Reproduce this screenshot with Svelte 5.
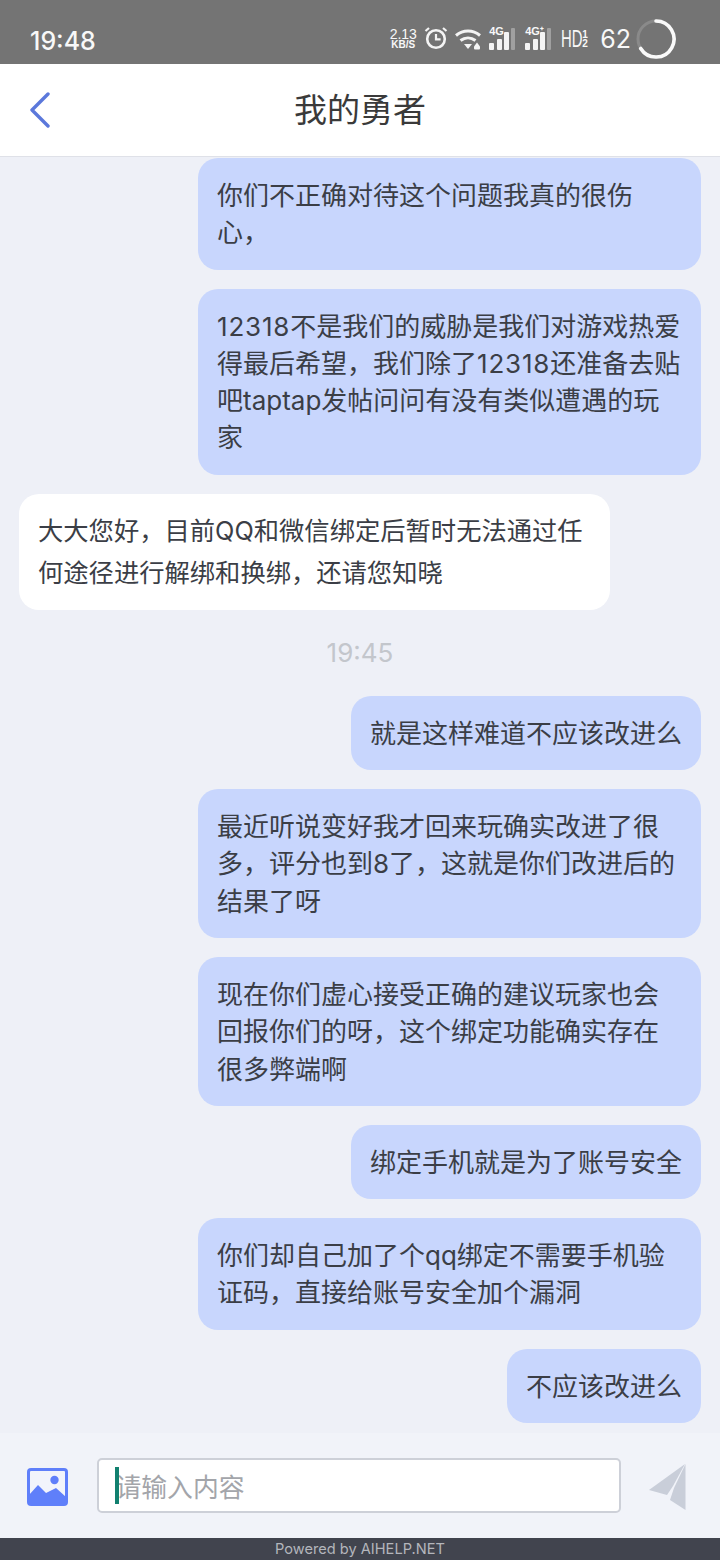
<script>
	const messages = [
		{ side: 'me', wide: true, lines: ['你们不正确对待这个问题我真的很伤', '心，'] },
		{ side: 'me', wide: true, lines: ['12318不是我们的威胁是我们对游戏热爱', '得最后希望，我们除了12318还准备去贴', '吧taptap发帖问问有没有类似遭遇的玩', '家'] },
		{ side: 'them', lines: ['大大您好，目前QQ和微信绑定后暂时无法通过任', '何途径进行解绑和换绑，还请您知晓'] },
		{ time: '19:45' },
		{ side: 'me', lines: ['就是这样难道不应该改进么'] },
		{ side: 'me', wide: true, lines: ['最近听说变好我才回来玩确实改进了很', '多，评分也到8了，这就是你们改进后的', '结果了呀'] },
		{ side: 'me', wide: true, lines: ['现在你们虚心接受正确的建议玩家也会', '回报你们的呀，这个绑定功能确实存在', '很多弊端啊'] },
		{ side: 'me', lines: ['绑定手机就是为了账号安全'] },
		{ side: 'me', wide: true, lines: ['你们却自己加了个qq绑定不需要手机验', '证码，直接给账号安全加个漏洞'] },
		{ side: 'me', lines: ['不应该改进么'] }
	];
</script>

<div class="page">
	<div class="status">
		<span class="clock">19:48</span>
		<div class="status-icons">
			<span class="speed"><b>2.13</b><b>KB/S</b></span>
			<svg class="alarm" width="24" height="24" viewBox="0 0 24 24" fill="none" stroke="#f4f4f4" stroke-width="2.6">
				<circle cx="12" cy="13" r="8.800" />
				<path d="M12 8v5.400h4.600" stroke-width="2.200" />
				<path d="M1.500 5l3.500-3M22.500 5L19 2" stroke-width="2.200" />
			</svg>
			<svg class="wifi" width="26" height="22" viewBox="0 0 26 22" fill="none" stroke="#f4f4f4" stroke-width="3">
				<path d="M1 7.500c7-6 17-6 24 0" />
				<path d="M5.500 12.500c4.500-3.500 10.500-3.500 15 0" />
				<path d="M9 16h8l-4 5z" fill="#f4f4f4" stroke="none" />
				<path d="M19 18.500h6l-3-4z" fill="#f4f4f4" stroke="none" />
				<rect x="19" y="18" width="6" height="3.500" rx="1" fill="#f4f4f4" stroke="none" />
			</svg>
			<div class="signal">
				<span class="net">4G</span>
				<svg width="26" height="22" viewBox="0 0 26 22" fill="#f4f4f4">
					<rect x="0" y="15" width="5" height="7" rx="1" />
					<rect x="8" y="11" width="5" height="11" rx="1" />
					<rect x="15" y="4" width="5" height="18" rx="1" />
					<rect x="22" y="0" width="4" height="22" rx="1" fill="#a0a0a0" />
				</svg>
			</div>
			<div class="signal second">
				<span class="net">4G⁺</span>
				<svg width="26" height="22" viewBox="0 0 26 22" fill="#f4f4f4">
					<rect x="0" y="15" width="5" height="7" rx="1" />
					<rect x="8" y="11" width="5" height="11" rx="1" />
					<rect x="15" y="4" width="5" height="18" rx="1" />
					<rect x="22" y="0" width="4" height="22" rx="1" fill="#a0a0a0" />
				</svg>
			</div>
			<span class="hd"><span class="hd-main">HD</span><span class="hd-sub"><i>1</i><i>2</i></span></span>
			<span class="battery">62</span>
			<svg class="ring" width="44" height="44" viewBox="0 0 44 44" fill="none">
				<circle cx="22" cy="22" r="18" stroke="#8a8a8a" stroke-width="3" />
				<path d="M22 4a18 18 0 1 1-15.300 27.500" stroke="#fafafa" stroke-width="3.600" stroke-linecap="round" />
			</svg>
		</div>
	</div>

	<header class="header">
		<svg class="back" width="22" height="36" viewBox="0 0 22 36" fill="none" stroke="#5b78db" stroke-width="3.400" stroke-linecap="round" stroke-linejoin="round">
			<path d="M19 2L3 18l16 16" />
		</svg>
		<h1>我的勇者</h1>
	</header>

	<main class="chat">
		{#each messages as msg}
			{#if msg.time}
				<div class="time">{msg.time}</div>
			{:else}
				<div class="bubble {msg.side}" class:wide={msg.wide}>
					{#each msg.lines as line}
						<div>
							{#each line.split(/(\d{5})/) as part}
								{#if /^\d{5}$/.test(part)}<span class="num">{part}</span>{:else}{part}{/if}
							{/each}
						</div>
					{/each}
				</div>
			{/if}
		{/each}
	</main>

	<div class="composer">
		<svg class="pic" width="41" height="38" viewBox="0 0 41 38">
			<rect x="0" y="0" width="41" height="38" rx="4" fill="#5f7ffa" />
			<rect x="3" y="3" width="35" height="30" rx="1" fill="#f2f4fb" />
			<circle cx="27.500" cy="12" r="4.200" fill="#5f7ffa" />
			<path d="M2 27l9-10 8 8 10-5 10 9v7H2z" fill="#5f7ffa" />
		</svg>
		<div class="input">
			<span class="caret"></span>
			<span class="placeholder">请输入内容</span>
		</div>
		<svg class="send" width="37" height="46" viewBox="0 0 37 46">
			<path d="M0 26L36 0 24 22 18 31z" fill="#c9ced9" />
			<path d="M36.500 0v46L21 36l4-12z" fill="#c9ced9" />
		</svg>
	</div>

	<footer class="footer">Powered by AIHELP.NET</footer>
</div>

<style>
	:global(body) {
		margin: 0;
		background: #eef0f7;
	}

	.page {
		display: flex;
		flex-direction: column;
		width: 720px;
		height: 1560px;
		overflow: hidden;
		font-family: Inter, "Noto Sans CJK SC", sans-serif;
		background: #eef0f7;
	}

	.status {
		display: flex;
		justify-content: space-between;
		align-items: center;
		flex: none;
		height: 64px;
		padding: 14px 42px 0 30px;
		box-sizing: border-box;
		background: #747474;
		color: #f8f8f8;
	}

	.clock {
		margin-top: 3px;
		font-size: 25px;
		font-weight: 500;
	}

	.status-icons {
		display: flex;
		align-items: center;
	}

	.speed {
		display: flex;
		flex-direction: column;
		align-items: center;
		width: 26px;
		font-family: "Liberation Sans", sans-serif;
		font-size: 10px;
		line-height: 10px;
	}

	.speed b:first-child {
		font-size: 14px;
		line-height: 12px;
		font-weight: 400;
	}

	.alarm {
		margin: -2px 0 0 8px;
	}

	.wifi {
		margin-left: 7px;
	}

	.signal {
		position: relative;
		width: 26px;
		height: 22px;
		margin-left: 8px;
	}

	.signal.second {
		margin-left: 10px;
	}

	.signal svg {
		display: block;
	}

	.net {
		position: absolute;
		top: -3px;
		left: 0;
		font-family: "Liberation Sans", sans-serif;
		font-size: 11px;
		font-weight: 700;
		line-height: 12px;
	}

	.hd {
		display: flex;
		align-items: center;
		width: 30px;
		margin-left: 10px;
		font-family: "Liberation Sans", sans-serif;
	}

	.hd-main {
		display: inline-block;
		width: 21px;
		font-size: 24px;
		line-height: 24px;
		transform: scaleX(0.62);
		transform-origin: left;
	}

	.hd-sub {
		display: flex;
		flex-direction: column;
		font-size: 10px;
		line-height: 9px;
		font-weight: 700;
	}

	.hd-sub i {
		font-style: normal;
	}

	.battery {
		margin-left: 9px;
		font-size: 25px;
	}

	.ring {
		margin-left: 3px;
	}

	.header {
		position: relative;
		display: flex;
		justify-content: center;
		align-items: center;
		flex: none;
		height: 93px;
		padding-bottom: 4px;
		background: #fff;
		border-bottom: 1px solid #dfe1e8;
		box-sizing: border-box;
	}

	.back {
		position: absolute;
		left: 29px;
		top: 28px;
	}

	h1 {
		margin: 0;
		font-size: 33px;
		font-weight: 400;
		color: #3a3a3a;
	}

	.chat {
		flex: 1;
		display: flex;
		flex-direction: column;
		gap: 19px;
		padding: 1px 19px 0;
		overflow: hidden;
	}

	.bubble {
		box-sizing: border-box;
		padding: 19px 19px 18px;
		border-radius: 20px;
		font-size: 26px;
		line-height: 37.300px;
		color: #3b3e46;
		white-space: nowrap;
	}

	.num {
		letter-spacing: 0.800px;
	}

	.me {
		align-self: flex-end;
		background: #c8d6fd;
	}

	.me.wide {
		width: 503px;
	}

	.them {
		align-self: flex-start;
		width: 591px;
		padding: 16px 19px;
		font-size: 25.300px;
		line-height: 42px;
		background: #fff;
	}

	.time {
		margin: 6px 0;
		text-align: center;
		font-size: 26px;
		line-height: 36px;
		color: #c3c6cc;
	}

	.composer {
		display: flex;
		align-items: center;
		justify-content: space-between;
		flex: none;
		height: 105px;
		padding: 0 34px 0 27px;
		box-sizing: border-box;
		background: #f1f3f9;
	}

	.pic {
		margin-top: 2px;
	}

	.input {
		position: relative;
		display: flex;
		align-items: center;
		width: 524px;
		height: 55px;
		padding-left: 17px;
		box-sizing: border-box;
		background: #fff;
		border: 2px solid #cdd0d8;
		border-radius: 5px;
	}

	.caret {
		position: absolute;
		left: 16px;
		top: 7px;
		width: 4px;
		height: 37px;
		background: #11806f;
	}

	.placeholder {
		font-size: 25.800px;
		color: #a3a5aa;
	}

	.send {
		margin-top: 3px;
	}

	.footer {
		flex: none;
		height: 22px;
		line-height: 22px;
		text-align: center;
		font-size: 14.600px;
		color: #b4b6bc;
		background: #41444e;
	}
</style>
